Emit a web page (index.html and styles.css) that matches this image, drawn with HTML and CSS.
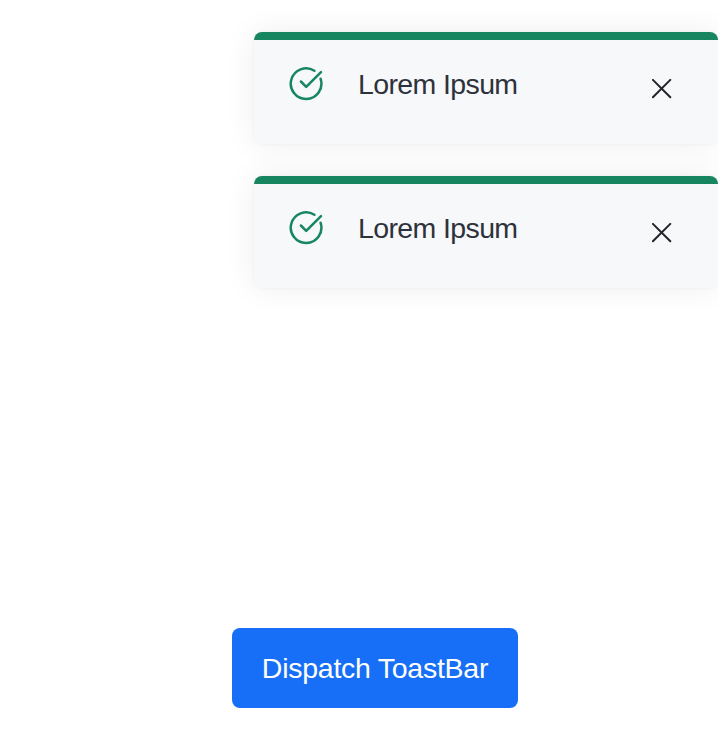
FILE: index.html
```html
<!DOCTYPE html>
<html lang="en">
<head>
<meta charset="utf-8">
<title>ToastBar</title>
<link rel="stylesheet" href="styles.css">
</head>
<body>
<main class="page">
  <section class="toasts">
    <div class="toast">
      <svg class="toast-icon" viewBox="0 0 36 36"><path d="M26.4 4.8A15.3 15.3 0 1 0 32.6 12.8"/><path d="M12.9 15.5l5.3 5.3L33 6.1"/></svg>
      <span class="toast-text">Lorem Ipsum</span>
      <button class="toast-close" aria-label="Close"><svg viewBox="0 0 20 20"><path d="M.9.9l17.4 17.4M18.3.9L.9 18.3"/></svg></button>
    </div>
    <div class="toast">
      <svg class="toast-icon" viewBox="0 0 36 36"><path d="M26.4 4.8A15.3 15.3 0 1 0 32.6 12.8"/><path d="M12.9 15.5l5.3 5.3L33 6.1"/></svg>
      <span class="toast-text">Lorem Ipsum</span>
      <button class="toast-close" aria-label="Close"><svg viewBox="0 0 20 20"><path d="M.9.9l17.4 17.4M18.3.9L.9 18.3"/></svg></button>
    </div>
  </section>
  <button class="dispatch">Dispatch ToastBar</button>
</main>
</body>
</html>
```
FILE: styles.css
```css
* { box-sizing: border-box; }
body { margin: 0; background: #fff; font-family: "Liberation Sans", Arial, sans-serif; }
.page { height: 740px; padding: 32px 0; display: flex; flex-direction: column; justify-content: space-between; overflow: hidden; }
.toasts { width: 464px; margin-left: 254px; display: grid; gap: 32px; }
.toast { height: 112px; border-top: 8px solid #178660; border-radius: 8px; background: #f7f8fa; box-shadow: 0 0 4px rgba(0, 0, 0, .04), 0 0 32px rgba(0, 0, 0, .07); display: flex; align-items: flex-start; padding: 26px 46px 0 34px; }
.toast-icon { width: 36px; height: 36px; fill: none; stroke: #178660; stroke-width: 2.5; stroke-linecap: round; stroke-linejoin: round; }
.toast-text { margin-left: 34px; padding-top: 2px; font-size: 28.5px; letter-spacing: -.62px; line-height: 32px; color: #2e323c; }
.toast-close { margin: 13px 0 0 auto; padding: 0; border: 0; background: none; width: 20px; height: 20px; }
.toast-close svg { display: block; width: 20px; height: 20px; fill: none; stroke: #212529; stroke-width: 2; stroke-linecap: round; }
.dispatch { width: 286px; height: 80px; margin-left: 232px; border: 0; border-radius: 8px; background: #166ff6; color: #fff; font: 28.5px "Liberation Sans", Arial, sans-serif; letter-spacing: -.26px; padding: 0; }
```
